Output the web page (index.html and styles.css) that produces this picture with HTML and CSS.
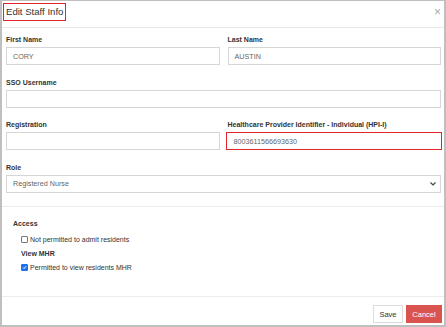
FILE: index.html
```html
<!DOCTYPE html>
<html>
<head>
<meta charset="utf-8">
<link rel="stylesheet" href="styles.css">
</head>
<body>
<div class="modal">
  <div class="modal-header">
    <span class="title">Edit Staff Info</span>
    <span class="close">&times;</span>
  </div>
  <div class="modal-body">
    <div class="row">
      <div class="group">
        <label class="lbl">First Name</label>
        <div class="input">CORY</div>
      </div>
      <div class="group">
        <label class="lbl">Last Name</label>
        <div class="input">AUSTIN</div>
      </div>
    </div>
    <div class="group">
      <label class="lbl">SSO Username</label>
      <div class="input"></div>
    </div>
    <div class="row">
      <div class="group">
        <label class="lbl">Registration</label>
        <div class="input"></div>
      </div>
      <div class="group">
        <label class="lbl">Healthcare Provider Identifier - Individual (HPI-I)</label>
        <div class="input highlight">8003611566693630</div>
      </div>
    </div>
    <div class="group last">
      <label class="lbl">Role</label>
      <div class="input select">Registered Nurse
        <svg class="chev" width="6" height="4" viewBox="0 0 6 4"><path d="M0.5 0.5 L3 3 L5.5 0.5" fill="none" stroke="#444" stroke-width="1.2"/></svg>
      </div>
    </div>
  </div>
  <div class="access">
    <div class="lbl access-title">Access</div>
    <div class="check"><span class="box"></span>Not permitted to admit residents</div>
    <div class="lbl sub">View MHR</div>
    <div class="check"><span class="box on"><svg width="7" height="7" viewBox="0 0 7 7"><path d="M1.3 3.6 L2.9 5.2 L5.8 1.6" fill="none" stroke="#fff" stroke-width="1.4"/></svg></span>Permitted to view residents MHR</div>
  </div>
  <div class="modal-footer">
    <span class="btn save">Save</span>
    <span class="btn cancel">Cancel</span>
  </div>
</div>
</body>
</html>
```
FILE: styles.css
```css
* { box-sizing: border-box; }
html, body { margin: 0; padding: 0; }
body {
  width: 446px;
  height: 327px;
  font-family: "Liberation Sans", Arial, sans-serif;
  color: #333;
  background: #fff;
}
.modal {
  width: 446px;
  height: 327px;
  border: 2px solid #bfbfbf;
  border-top-width: 1px;
  display: flex;
  flex-direction: column;
}
.modal-header {
  height: 27px;
  flex: none;
  border-bottom: 1px solid #e8e8e8;
  display: flex;
  align-items: flex-start;
  justify-content: space-between;
  padding: 2px 3px 0 1px;
}
.title {
  font-size: 9.6px;
  color: #333;
  border: 1.5px solid #e0242b;
  padding: 1px 2px 2px 2px;
  line-height: 13px;
}
.close {
  font-size: 12px;
  color: #aaa;
  margin-top: 3px;
  line-height: 12px;
}
.modal-body {
  flex: none;
  padding: 7px 3px 0 4px;
  border-bottom: 1px solid #ececec;
}
.row {
  display: flex;
  gap: 8px;
}
.row .group { flex: 1; }
.group {
  display: flex;
  flex-direction: column;
  margin-bottom: 12.5px;
}
.group.last { margin-bottom: 13px; }
.lbl {
  font-size: 7px;
  font-weight: bold;
  color: #333;
  line-height: 10px;
  margin-bottom: 2px;
}
.input {
  height: 18px;
  border: 1px solid #d6d6d6;
  font-size: 7.2px;
  color: #666;
  padding: 0 6px;
  display: flex;
  align-items: center;
}
.input.highlight {
  border: 1.5px solid #e0242b;
  margin-left: -2px;
  margin-right: -1px;
  padding-left: 7px;
}
.select {
  justify-content: space-between;
  padding-right: 4px;
}
.chev { display: block; }
.access {
  padding: 12px 0 0 11px;
  flex: 1;
  border-bottom: 1px solid #ececec;
}
.access-title { margin-bottom: 6px; }
.check {
  display: flex;
  align-items: center;
  font-size: 7px;
  color: #333;
  margin-left: 8px;
  line-height: 10px;
}
.box {
  width: 7px;
  height: 7px;
  border: 1px solid #777;
  border-radius: 1px;
  margin-right: 2px;
  display: inline-flex;
  align-items: center;
  justify-content: center;
}
.box.on {
  background: #1a73e8;
  border-color: #1a73e8;
}
.box svg { display: block; }
.sub { margin: 4px 0 4px 8px; }
.modal-footer {
  height: 28px;
  flex: none;
  display: flex;
  justify-content: flex-end;
  align-items: flex-start;
  gap: 3px;
  padding: 8px 2px 0 0;
}
.btn {
  height: 18px;
  font-size: 7.5px;
  display: flex;
  align-items: center;
  justify-content: center;
}
.save {
  width: 30px;
  border: 1px solid #ddd;
  color: #333;
  background: #fff;
}
.cancel {
  width: 36px;
  background: #d9534f;
  color: #fff;
}
```
